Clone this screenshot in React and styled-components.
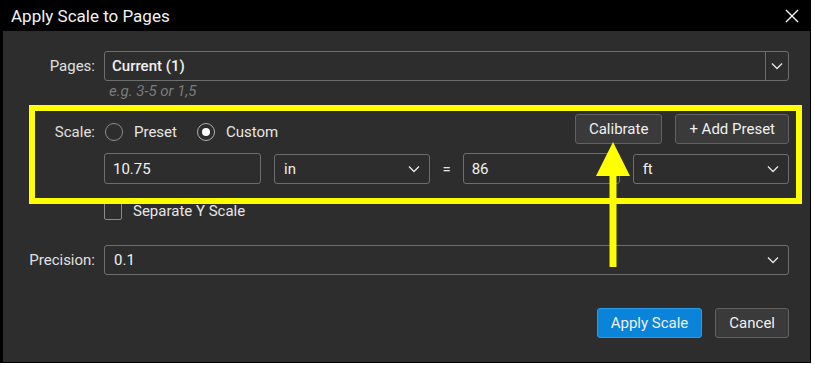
import React from 'react'
import styled, { createGlobalStyle } from 'styled-components'

const Global = createGlobalStyle`
  html, body { margin: 0; padding: 0; background: #fff; }
  body { font-family: Roboto, "Liberation Sans", sans-serif; }
`

function Chevron() {
  return (
    <svg width="12" height="8" viewBox="0 0 12 8">
      <polyline points="1,1.5 6,6.5 11,1.5" fill="none" stroke="#e8e8e8" strokeWidth="1.3" />
    </svg>
  )
}

function Select({ value, bold, split, width }) {
  return (
    <SelectBox style={width ? { width } : undefined}>
      <SelectText bold={bold}>{value}</SelectText>
      <Caret split={split}><Chevron /></Caret>
    </SelectBox>
  )
}

export default function App() {
  return (
    <>
      <Global />
      <Dialog>
        <TitleBar>
          <Title>Apply Scale to Pages</Title>
          <svg width="14" height="14" viewBox="0 0 14 14">
            <path d="M1 1 L13 13 M13 1 L1 13" stroke="#fff" strokeWidth="1.4" />
          </svg>
        </TitleBar>
        <Body>
          <Row>
            <Label>Pages:</Label>
            <Field>
              <Select value="Current (1)" bold split />
            </Field>
          </Row>
          <Hint>e.g. 3-5 or 1,5</Hint>

          <Row top={15}>
            <Label low>Scale:</Label>
            <Field>
              <RadioGroup>
                <Radio />
                <RadioText>Preset</RadioText>
                <Radio checked />
                <RadioText>Custom</RadioText>
              </RadioGroup>
              <Spacer />
              <Button>Calibrate</Button>
              <Button>+ Add Preset</Button>
            </Field>
          </Row>

          <Row top={9}>
            <Label />
            <Field>
              <Input width={157}>10.75</Input>
              <Select value="in" width={157} />
              <Equals>=</Equals>
              <Input width={157}>86</Input>
              <Select value="ft" />
            </Field>
          </Row>

          <Row top={18}>
            <Label />
            <Field>
              <CheckBox />
              <RadioText>Separate Y Scale</RadioText>
            </Field>
          </Row>

          <Row top={25}>
            <Label>Precision:</Label>
            <Field>
              <Select value="0.1" />
            </Field>
          </Row>

          <Footer>
            <Button primary>Apply Scale</Button>
            <Button>Cancel</Button>
          </Footer>

          <Highlight />
          <Arrow width="36" height="126" viewBox="0 0 36 126">
            <polygon points="18,0 1,34 35,34" fill="#ffff00" />
            <rect x="14.5" y="33" width="7" height="92" fill="#ffff00" />
          </Arrow>
        </Body>
      </Dialog>
    </>
  )
}

const Dialog = styled.div`
  width: 807px;
  height: 362px;
  border-left: 3px solid #000;
  border-right: 1px solid #000;
  border-bottom: 1px solid #000;
  background: #2d2d2d;
  display: flex;
  flex-direction: column;
`
const TitleBar = styled.div`
  height: 31px;
  background: #000;
  display: flex;
  align-items: center;
  justify-content: space-between;
  padding: 0 11px 0 8px;
`
const Title = styled.div`
  color: #f2f2f2;
  font-size: 17px;
`
const Body = styled.div`
  position: relative;
  flex: 1;
  padding: 20px 21px 0 0;
  color: #e6e6e6;
  font-size: 15px;
`
const Row = styled.div`
  display: flex;
  align-items: center;
  margin-top: ${p => p.top || 0}px;
`
const Label = styled.div`
  width: 92px;
  flex: none;
  text-align: right;
  padding-right: 9px;
  margin-top: ${p => (p.low ? 6 : 0)}px;
  color: #e0e0e0;
`
const Field = styled.div`
  flex: 1;
  display: flex;
  align-items: center;
  gap: 13px;
`
const SelectBox = styled.div`
  flex: 1;
  height: 30px;
  box-sizing: border-box;
  border: 1px solid #6e6e6e;
  border-radius: 3px;
  display: flex;
  align-items: center;
`
const SelectText = styled.div`
  flex: 1;
  padding-left: ${p => (p.bold ? 7 : 9)}px;
  font-weight: ${p => (p.bold ? 500 : 400)};
  color: #f0f0f0;
`
const Caret = styled.div`
  width: 22px;
  height: 100%;
  display: flex;
  align-items: center;
  justify-content: center;
  margin-right: ${p => (p.split ? 0 : 4)}px;
  border-left: ${p => (p.split ? '1px solid #6e6e6e' : 'none')};
`
const Hint = styled.div`
  margin: 2px 0 0 106px;
  font-size: 15px;
  line-height: 16px;
  font-style: italic;
  color: #7b7b7b;
`
const RadioGroup = styled.div`
  display: flex;
  align-items: center;
  gap: 11px;
  margin-top: 6px;
`
const Radio = styled.span`
  width: 18px;
  height: 18px;
  box-sizing: border-box;
  border-radius: 50%;
  border: 1.5px solid ${p => (p.checked ? '#b0b0b0' : '#8a8a8a')};
  display: flex;
  align-items: center;
  justify-content: center;
  margin-left: 1px;
  &::after {
    content: '';
    width: 8px;
    height: 8px;
    border-radius: 50%;
    background: ${p => (p.checked ? '#fff' : 'transparent')};
  }
`
const RadioText = styled.span`
  color: #e6e6e6;
  margin-right: 8px;
`
const Spacer = styled.div`
  flex: 1;
`
const Button = styled.button`
  height: 30px;
  padding: 0 13px;
  font-family: Roboto, "Liberation Sans", sans-serif;
  font-size: 15px;
  color: #f0f0f0;
  border-radius: 3px;
  background: ${p => (p.primary ? '#0a84d9' : '#3a3a3a')};
  border: 1px solid ${p => (p.primary ? '#2a9cec' : '#626262')};
`
const Input = styled.div`
  width: ${p => p.width}px;
  height: 31px;
  box-sizing: border-box;
  border: 1px solid #6e6e6e;
  border-radius: 3px;
  padding-left: 8px;
  display: flex;
  align-items: center;
  color: #f0f0f0;
  flex: none;
`
const Equals = styled.span`
  margin: 0 -1px;
  color: #e6e6e6;
`
const CheckBox = styled.span`
  width: 18px;
  height: 18px;
  box-sizing: border-box;
  border: 1.5px solid #8a8a8a;
  border-radius: 2px;
  margin-right: -2px;
`
const Footer = styled.div`
  margin-top: 33px;
  display: flex;
  justify-content: flex-end;
  gap: 13px;
`
const Highlight = styled.div`
  position: absolute;
  left: 26px;
  top: 74px;
  width: 773px;
  height: 99px;
  box-sizing: border-box;
  border: 6px solid #ffff00;
  pointer-events: none;
`
const Arrow = styled.svg`
  position: absolute;
  left: 592px;
  top: 111px;
`
